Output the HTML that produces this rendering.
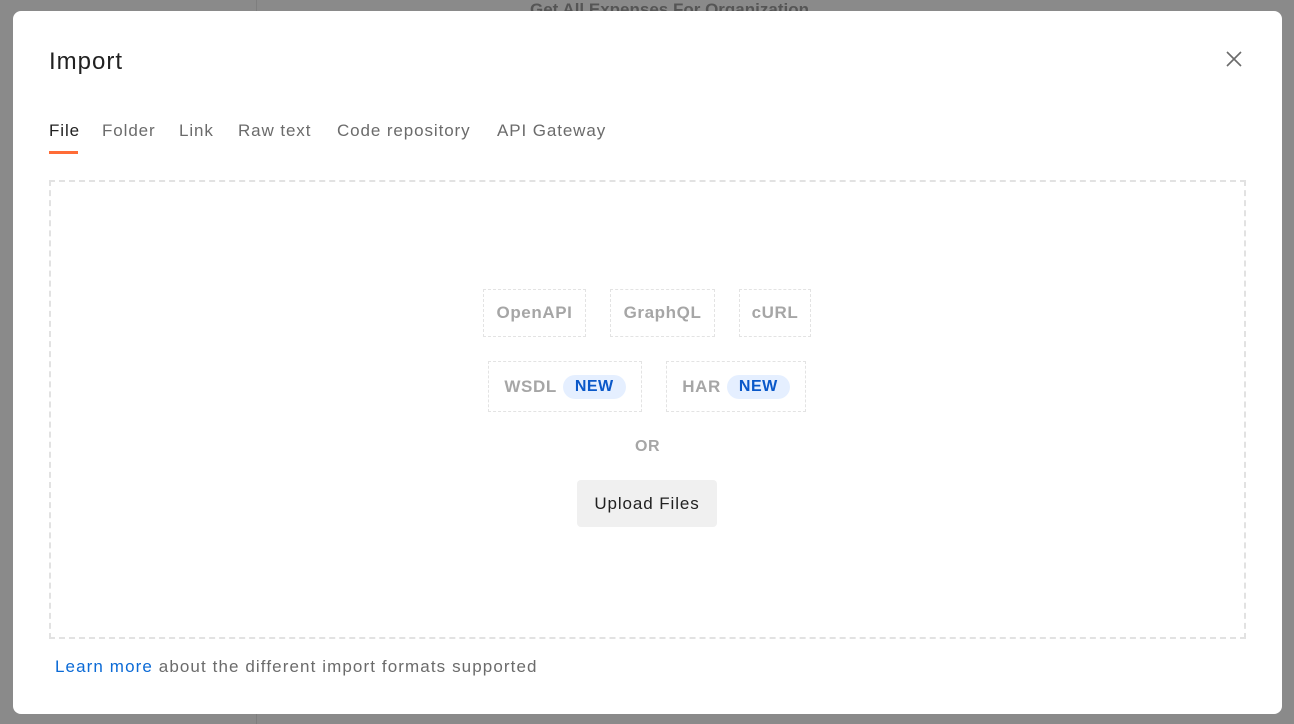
<!DOCTYPE html>
<html><head><meta charset="utf-8"><style>
*{box-sizing:border-box;margin:0;padding:0}
body{width:1294px;height:724px;background:#8a8a8a;font-family:"Liberation Sans",sans-serif;position:relative;overflow:hidden}
.bgline{position:absolute;background:#7e7e7e}
.modal{position:absolute;left:13px;top:11px;width:1269px;height:703px;background:#fff;border-radius:8px}
h1{position:absolute;left:36px;top:37px;font-size:24px;font-weight:normal;color:#212121;letter-spacing:1px}
.close{position:absolute;left:1212px;top:39px}
.tabs{position:absolute;left:36px;top:110px;font-size:17px;color:#6b6b6b;letter-spacing:0.9px}
.tabs span{position:absolute;white-space:nowrap}
.ul{position:absolute;left:36px;top:140px;width:29px;height:3px;background:#ff6c37}
.drop{position:absolute;left:36px;top:169px;width:1197px;height:459px;border:2px dashed #e2e2e2}
.box{position:absolute;border:1px dashed #e3e3e3;font-size:17px;font-weight:bold;color:#a6a6a6;display:flex;align-items:center;justify-content:center;letter-spacing:0.6px}
.new{background:#e5efff;color:#0a58c9;border-radius:12px;padding:3px 12px;margin-left:6px;font-size:16px;letter-spacing:0.5px}
.or{position:absolute;left:622px;top:427px;font-size:16px;font-weight:bold;color:#a6a6a6;letter-spacing:0.5px}
.btn{position:absolute;left:564px;top:469px;width:140px;height:47px;background:#f0f0f0;border-radius:4px;font-size:17px;color:#212121;display:flex;align-items:center;justify-content:center;letter-spacing:0.9px}
.foot{position:absolute;left:42px;top:646px;font-size:17px;color:#6b6b6b;letter-spacing:1.1px}
.foot a{color:#0b6ad6;text-decoration:none}
</style></head><body>
<div class="bgline" style="left:256px;top:0;width:1px;height:724px"></div>
<div style="position:absolute;left:530px;top:0;font-size:17px;font-weight:bold;color:#333;opacity:.6">Get All Expenses For Organization</div>
<div class="modal">
<h1>Import</h1>
<svg class="close" width="18" height="18" viewBox="0 0 18 18"><path d="M2 2L16 16M16 2L2 16" stroke="#6b6b6b" stroke-width="1.6"/></svg>
<div class="tabs">
<span style="left:0;color:#212121">File</span>
<span style="left:53px">Folder</span>
<span style="left:130px">Link</span>
<span style="left:189px">Raw text</span>
<span style="left:288px">Code repository</span>
<span style="left:448px">API Gateway</span>
</div>
<div class="ul"></div>
<div class="drop"></div>
<div class="box" style="left:470px;top:278px;width:103px;height:48px">OpenAPI</div>
<div class="box" style="left:597px;top:278px;width:105px;height:48px">GraphQL</div>
<div class="box" style="left:726px;top:278px;width:72px;height:48px">cURL</div>
<div class="box" style="left:475px;top:350px;width:154px;height:51px">WSDL<span class="new">NEW</span></div>
<div class="box" style="left:653px;top:350px;width:140px;height:51px">HAR<span class="new">NEW</span></div>
<div class="or">OR</div>
<div class="btn">Upload Files</div>
<div class="foot"><a>Learn more</a> about the different import formats supported</div>
</div>
</body></html>
